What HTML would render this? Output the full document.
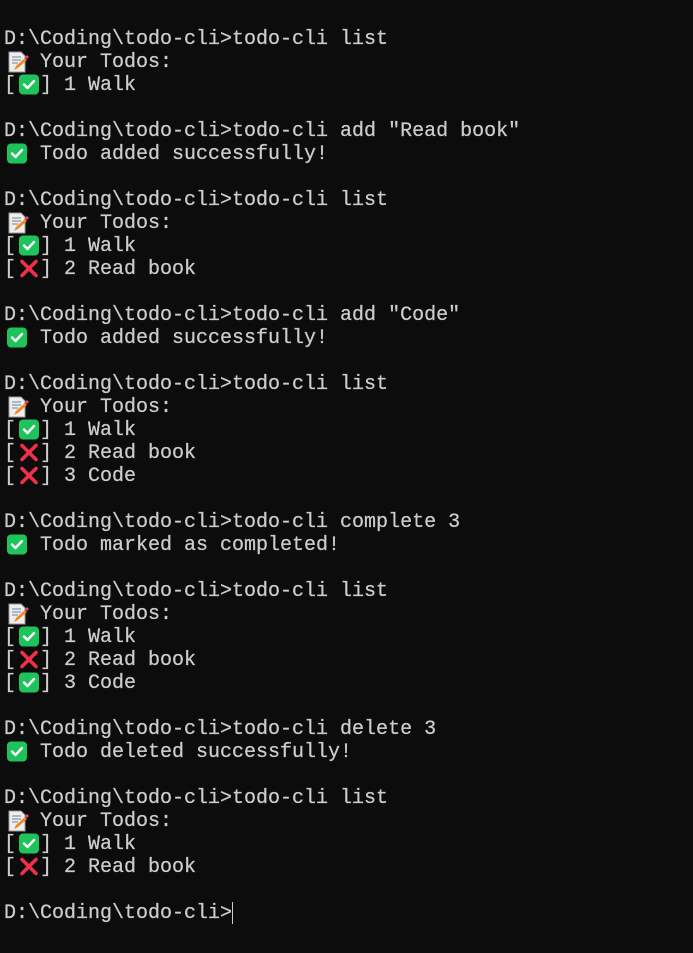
<!DOCTYPE html>
<html><head><meta charset="utf-8"><style>
html,body{margin:0;background:#0c0c0c;width:693px;height:953px;overflow:hidden}
pre{margin:0;padding:5px 0 0 4px;font-family:"Liberation Mono",monospace;font-size:20px;line-height:23px;color:#cccccc;white-space:pre;-webkit-text-stroke:0.25px #cccccc}
.e{display:inline-block;width:24px;height:23px;vertical-align:top;position:relative}
.e svg{position:absolute;left:3px;top:0px}
.cur{display:inline-block;width:1px;height:22px;background:#ccc;vertical-align:top}
</style></head><body>
<pre>

D:\Coding\todo-cli&gt;todo-cli list
<span class="e"><svg width="22" height="22" viewBox="0 0 22 22"><path d="M2 1h12l4 4v16H2z" fill="#eee" stroke="#999" stroke-width="1"/><path d="M5 6h9M5 9h9M5 12h6" stroke="#8899aa" stroke-width="1.3"/><path d="M7 19l2-4 9-8 2 2-9 8z" fill="#f08a24"/><path d="M18 6l2-2 2 2-2 2z" fill="#e8457a"/></svg></span> Your Todos:
[<span class="e"><svg width="20" height="21" viewBox="0 0 20 21"><rect x="0" y="0.5" width="20" height="20" rx="4" fill="#1fc35b"/><path d="M5 10.5l3.5 3.5 6.5-7" stroke="#fff" stroke-width="2.4" fill="none" stroke-linecap="round" stroke-linejoin="round"/></svg></span>] 1 Walk

D:\Coding\todo-cli&gt;todo-cli add "Read book"
<span class="e"><svg width="20" height="21" viewBox="0 0 20 21"><rect x="0" y="0.5" width="20" height="20" rx="4" fill="#1fc35b"/><path d="M5 10.5l3.5 3.5 6.5-7" stroke="#fff" stroke-width="2.4" fill="none" stroke-linecap="round" stroke-linejoin="round"/></svg></span> Todo added successfully!

D:\Coding\todo-cli&gt;todo-cli list
<span class="e"><svg width="22" height="22" viewBox="0 0 22 22"><path d="M2 1h12l4 4v16H2z" fill="#eee" stroke="#999" stroke-width="1"/><path d="M5 6h9M5 9h9M5 12h6" stroke="#8899aa" stroke-width="1.3"/><path d="M7 19l2-4 9-8 2 2-9 8z" fill="#f08a24"/><path d="M18 6l2-2 2 2-2 2z" fill="#e8457a"/></svg></span> Your Todos:
[<span class="e"><svg width="20" height="21" viewBox="0 0 20 21"><rect x="0" y="0.5" width="20" height="20" rx="4" fill="#1fc35b"/><path d="M5 10.5l3.5 3.5 6.5-7" stroke="#fff" stroke-width="2.4" fill="none" stroke-linecap="round" stroke-linejoin="round"/></svg></span>] 1 Walk
[<span class="e"><svg width="20" height="21" viewBox="0 0 20 21"><path d="M3 3.5l14 14M17 3.5l-14 14" stroke="#f0304a" stroke-width="3.6" stroke-linecap="round"/></svg></span>] 2 Read book

D:\Coding\todo-cli&gt;todo-cli add "Code"
<span class="e"><svg width="20" height="21" viewBox="0 0 20 21"><rect x="0" y="0.5" width="20" height="20" rx="4" fill="#1fc35b"/><path d="M5 10.5l3.5 3.5 6.5-7" stroke="#fff" stroke-width="2.4" fill="none" stroke-linecap="round" stroke-linejoin="round"/></svg></span> Todo added successfully!

D:\Coding\todo-cli&gt;todo-cli list
<span class="e"><svg width="22" height="22" viewBox="0 0 22 22"><path d="M2 1h12l4 4v16H2z" fill="#eee" stroke="#999" stroke-width="1"/><path d="M5 6h9M5 9h9M5 12h6" stroke="#8899aa" stroke-width="1.3"/><path d="M7 19l2-4 9-8 2 2-9 8z" fill="#f08a24"/><path d="M18 6l2-2 2 2-2 2z" fill="#e8457a"/></svg></span> Your Todos:
[<span class="e"><svg width="20" height="21" viewBox="0 0 20 21"><rect x="0" y="0.5" width="20" height="20" rx="4" fill="#1fc35b"/><path d="M5 10.5l3.5 3.5 6.5-7" stroke="#fff" stroke-width="2.4" fill="none" stroke-linecap="round" stroke-linejoin="round"/></svg></span>] 1 Walk
[<span class="e"><svg width="20" height="21" viewBox="0 0 20 21"><path d="M3 3.5l14 14M17 3.5l-14 14" stroke="#f0304a" stroke-width="3.6" stroke-linecap="round"/></svg></span>] 2 Read book
[<span class="e"><svg width="20" height="21" viewBox="0 0 20 21"><path d="M3 3.5l14 14M17 3.5l-14 14" stroke="#f0304a" stroke-width="3.6" stroke-linecap="round"/></svg></span>] 3 Code

D:\Coding\todo-cli&gt;todo-cli complete 3
<span class="e"><svg width="20" height="21" viewBox="0 0 20 21"><rect x="0" y="0.5" width="20" height="20" rx="4" fill="#1fc35b"/><path d="M5 10.5l3.5 3.5 6.5-7" stroke="#fff" stroke-width="2.4" fill="none" stroke-linecap="round" stroke-linejoin="round"/></svg></span> Todo marked as completed!

D:\Coding\todo-cli&gt;todo-cli list
<span class="e"><svg width="22" height="22" viewBox="0 0 22 22"><path d="M2 1h12l4 4v16H2z" fill="#eee" stroke="#999" stroke-width="1"/><path d="M5 6h9M5 9h9M5 12h6" stroke="#8899aa" stroke-width="1.3"/><path d="M7 19l2-4 9-8 2 2-9 8z" fill="#f08a24"/><path d="M18 6l2-2 2 2-2 2z" fill="#e8457a"/></svg></span> Your Todos:
[<span class="e"><svg width="20" height="21" viewBox="0 0 20 21"><rect x="0" y="0.5" width="20" height="20" rx="4" fill="#1fc35b"/><path d="M5 10.5l3.5 3.5 6.5-7" stroke="#fff" stroke-width="2.4" fill="none" stroke-linecap="round" stroke-linejoin="round"/></svg></span>] 1 Walk
[<span class="e"><svg width="20" height="21" viewBox="0 0 20 21"><path d="M3 3.5l14 14M17 3.5l-14 14" stroke="#f0304a" stroke-width="3.6" stroke-linecap="round"/></svg></span>] 2 Read book
[<span class="e"><svg width="20" height="21" viewBox="0 0 20 21"><rect x="0" y="0.5" width="20" height="20" rx="4" fill="#1fc35b"/><path d="M5 10.5l3.5 3.5 6.5-7" stroke="#fff" stroke-width="2.4" fill="none" stroke-linecap="round" stroke-linejoin="round"/></svg></span>] 3 Code

D:\Coding\todo-cli&gt;todo-cli delete 3
<span class="e"><svg width="20" height="21" viewBox="0 0 20 21"><rect x="0" y="0.5" width="20" height="20" rx="4" fill="#1fc35b"/><path d="M5 10.5l3.5 3.5 6.5-7" stroke="#fff" stroke-width="2.4" fill="none" stroke-linecap="round" stroke-linejoin="round"/></svg></span> Todo deleted successfully!

D:\Coding\todo-cli&gt;todo-cli list
<span class="e"><svg width="22" height="22" viewBox="0 0 22 22"><path d="M2 1h12l4 4v16H2z" fill="#eee" stroke="#999" stroke-width="1"/><path d="M5 6h9M5 9h9M5 12h6" stroke="#8899aa" stroke-width="1.3"/><path d="M7 19l2-4 9-8 2 2-9 8z" fill="#f08a24"/><path d="M18 6l2-2 2 2-2 2z" fill="#e8457a"/></svg></span> Your Todos:
[<span class="e"><svg width="20" height="21" viewBox="0 0 20 21"><rect x="0" y="0.5" width="20" height="20" rx="4" fill="#1fc35b"/><path d="M5 10.5l3.5 3.5 6.5-7" stroke="#fff" stroke-width="2.4" fill="none" stroke-linecap="round" stroke-linejoin="round"/></svg></span>] 1 Walk
[<span class="e"><svg width="20" height="21" viewBox="0 0 20 21"><path d="M3 3.5l14 14M17 3.5l-14 14" stroke="#f0304a" stroke-width="3.6" stroke-linecap="round"/></svg></span>] 2 Read book

D:\Coding\todo-cli&gt;<span class="cur"></span>
</pre>
</body></html>
